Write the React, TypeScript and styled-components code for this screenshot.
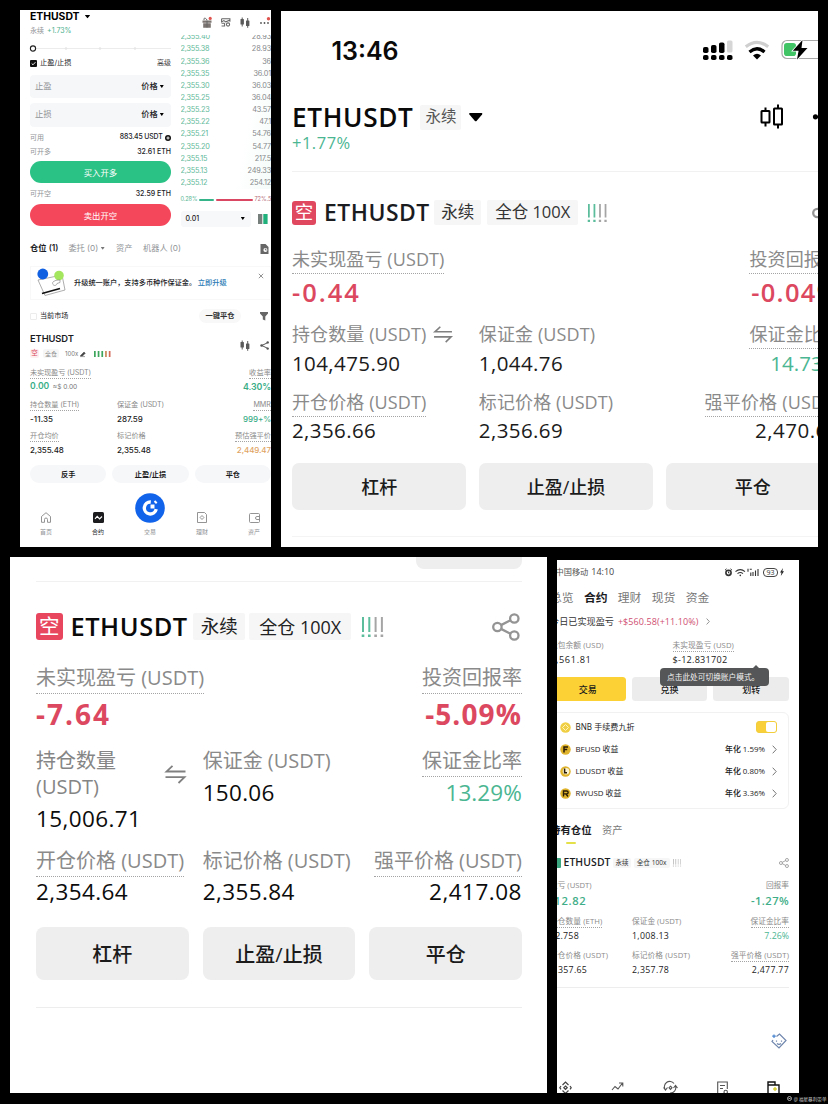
import React from "react";
import styled, { createGlobalStyle } from "styled-components";

const sans = `"Open Sans", "Noto Sans CJK SC", sans-serif`;
const inter = `Inter, "Noto Sans CJK SC", sans-serif`;

const Global = createGlobalStyle`
  * { box-sizing: border-box; }
  body { margin: 0; background: #000; overflow: hidden; }
  svg { display: block; flex: none; overflow: visible; }
`;

const Page = styled.main`
  width: 828px;
  height: 1104px;
  overflow: hidden;
  background: #000;
  display: flex;
  flex-direction: column;
  color: #111;
`;

const TopSpace = styled.div`height: 10px; flex: none;`;

const Shelf = styled.div<{ $left: number; $h: number }>`
  display: flex;
  align-items: flex-start;
  gap: 10px;
  padding-left: ${(p) => p.$left}px;
  height: ${(p) => p.$h}px;
  flex: none;
`;

const Screen = styled.section<{ $w: number; $h: number; $mt?: number; $pad: number; $font?: string }>`
  width: ${(p) => p.$w}px;
  height: ${(p) => p.$h}px;
  margin-top: ${(p) => p.$mt ?? 0}px;
  padding-left: ${(p) => p.$pad}px;
  background: #fff;
  overflow: hidden;
  flex: none;
  font-family: ${(p) => p.$font ?? sans};
`;

const Content = styled.div<{ $w: number; $ml?: number }>`
  width: ${(p) => p.$w}px;
  height: 100%;
  margin-left: ${(p) => p.$ml ?? 0}px;
  display: flex;
  flex-direction: column;
`;

const Line = styled.div<{ $h: number; $mt?: number; $gap?: number; $between?: boolean; $pl?: number }>`
  display: flex;
  align-items: center;
  flex: none;
  height: ${(p) => p.$h}px;
  margin-top: ${(p) => p.$mt ?? 0}px;
  padding-left: ${(p) => p.$pl ?? 0}px;
  gap: ${(p) => p.$gap ?? 0}px;
  justify-content: ${(p) => (p.$between ? "space-between" : "flex-start")};
`;

const Text = styled.span<{ $s: number; $c?: string; $w?: number; $ls?: number; $ml?: number }>`
  font-size: ${(p) => p.$s}px;
  color: ${(p) => p.$c ?? "#1b1c1f"};
  font-weight: ${(p) => p.$w ?? 400};
  letter-spacing: ${(p) => p.$ls ?? 0}px;
  margin-left: ${(p) => p.$ml ?? 0}px;
  white-space: nowrap;
  line-height: 1.3;
  flex: none;
`;

const Label = styled.span<{ $s: number; $h: number; $dots?: boolean; $ls?: number; $c?: string }>`
  display: block;
  width: max-content;
  font-size: ${(p) => p.$s}px;
  line-height: ${(p) => p.$h}px;
  height: ${(p) => p.$h + 1}px;
  letter-spacing: ${(p) => p.$ls ?? 0}px;
  color: ${(p) => p.$c ?? "#8a8a8a"};
  border-bottom: 1px dotted ${(p) => (p.$dots ? "#a4a4a4" : "transparent")};
  white-space: nowrap;
`;

const Value = styled.span<{ $s: number; $h: number; $mt?: number; $w?: number; $c?: string; $ls?: number }>`
  display: block;
  font-size: ${(p) => p.$s}px;
  line-height: ${(p) => p.$h}px;
  height: ${(p) => p.$h}px;
  margin-top: ${(p) => p.$mt ?? 0}px;
  font-weight: ${(p) => p.$w ?? 400};
  color: ${(p) => p.$c ?? "#1b1b1b"};
  letter-spacing: ${(p) => p.$ls ?? 0}px;
  white-space: nowrap;
`;

const Metrics = styled.div<{ $cols: string; $gap?: number; $mt: number }>`
  display: grid;
  grid-template-columns: ${(p) => p.$cols};
  column-gap: ${(p) => p.$gap ?? 0}px;
  margin-top: ${(p) => p.$mt}px;
  flex: none;
`;

const Metric = styled.div<{ $right?: boolean }>`
  display: flex;
  flex-direction: column;
  min-width: 0;
  align-items: ${(p) => (p.$right ? "flex-end" : "flex-start")};
`;

const Divider = styled.div<{ $mt: number; $c?: string }>`
  height: 1px;
  flex: none;
  margin-top: ${(p) => p.$mt}px;
  background: ${(p) => p.$c ?? "#ededed"};
`;

const Actions = styled.div<{ $gap: number; $mt: number }>`
  display: grid;
  grid-template-columns: repeat(3, 1fr);
  gap: ${(p) => p.$gap}px;
  margin-top: ${(p) => p.$mt}px;
  flex: none;
`;

const Button = styled.div<{ $h: number; $s: number; $r: number; $bg?: string; $c?: string; $w?: number; $mt?: number }>`
  height: ${(p) => p.$h}px;
  margin-top: ${(p) => p.$mt ?? 0}px;
  border-radius: ${(p) => p.$r}px;
  background: ${(p) => p.$bg ?? "#eeeeee"};
  color: ${(p) => p.$c ?? "#1b1b1b"};
  font-size: ${(p) => p.$s}px;
  font-weight: ${(p) => p.$w ?? 500};
  display: flex;
  align-items: center;
  justify-content: center;
  white-space: nowrap;
  flex: none;
`;

const Chip = styled.span<{ $w: number; $h: number; $s: number; $ml?: number; $bg?: string; $c?: string; $ls?: number; $r?: number; $bold?: boolean }>`
  width: ${(p) => p.$w}px;
  height: ${(p) => p.$h}px;
  margin-left: ${(p) => p.$ml ?? 0}px;
  background: ${(p) => p.$bg ?? "#f6f6f6"};
  color: ${(p) => p.$c ?? "#333"};
  font-size: ${(p) => p.$s}px;
  font-weight: ${(p) => (p.$bold ? 600 : 400)};
  letter-spacing: ${(p) => p.$ls ?? 0}px;
  border-radius: ${(p) => p.$r ?? 2}px;
  display: flex;
  align-items: center;
  justify-content: center;
  white-space: nowrap;
  line-height: 1;
  flex: none;
`;

const Spacer = styled.div`flex: 1;`;
const MarkSlot = styled.span<{ $ml: number }>`margin-left: ${(p) => p.$ml}px; flex: none;`;

/* ---------- icons ---------- */

const Caret = ({ w, h, c = "#000", ml = 0 }: { w: number; h: number; c?: string; ml?: number }) => (
  <MarkSlot $ml={ml}>
    <svg width={w} height={h} viewBox="0 0 10 6" preserveAspectRatio="none">
      <path d="M0.6 0h8.8q.9.3.3 1L5.6 5.6q-.6.6-1.2 0L.3 1Q-.3.3.6 0z" fill={c} />
    </svg>
  </MarkSlot>
);

const SignalMarks = ({ w, h, green = "#5bbd9b", gray = "#a5a5a5" }: { w: number; h: number; green?: string; gray?: string }) => (
  <svg width={w} height={h} viewBox="0 0 20 20" preserveAspectRatio="none">
    {[0, 1, 2, 3].map((i) => (
      <g key={i} fill={i < 2 ? green : gray}>
        <rect x={i * 6} y="0" width="1.9" height="15" />
        <rect x={i * 6 - 0.3} y="17.5" width="2.5" height="2.5" />
      </g>
    ))}
  </svg>
);

const ShareRings = ({ s, c = "#949494", sw = 2.3 }: { s: number; c?: string; sw?: number }) => (
  <svg width={s} height={s} viewBox="0 0 28 28" fill="none" stroke={c} strokeWidth={sw}>
    <circle cx="5.4" cy="14" r="4.2" />
    <circle cx="22.3" cy="5.5" r="4.2" />
    <circle cx="22.3" cy="22.5" r="4.2" />
    <path d="M9 12.1l9.5-4.8M9 15.9l9.5 4.8" />
  </svg>
);

const SwapIcon = ({ w, h }: { w: number; h: number }) => (
  <svg width={w} height={h} viewBox="0 0 21 19" fill="none" stroke="#808080" strokeWidth="1.8">
    <path d="M20.5 6.5H1.5L7.5 0.8M0.5 12.2h19l-6 5.8" />
  </svg>
);

const SolidCandles = () => (
  <svg width="10" height="11" viewBox="0 0 10 11" fill="#5a5a5a">
    <rect x="0.5" y="2" width="3.4" height="5.5" rx="0.5" />
    <rect x="1.7" y="0.5" width="1" height="9" />
    <rect x="6" y="3.5" width="3.4" height="5.5" rx="0.5" />
    <rect x="7.2" y="1" width="1" height="9.8" />
  </svg>
);

const Chevron = ({ w = 5, h = 9 }: { w?: number; h?: number }) => (
  <svg width={w} height={h} viewBox="0 0 5 9" fill="none" stroke="#777" strokeWidth="1">
    <path d="M0.7 0.7L4.2 4.5L0.7 8.3" />
  </svg>
);

/* ---------- trading screen ---------- */

const TradeArea = styled.div`
  display: grid;
  grid-template-columns: 141px 90.5px;
  column-gap: 9.5px;
  height: 216px;
  flex: none;
`;
const Column = styled.div`display: flex; flex-direction: column; min-width: 0;`;
const Field = styled.div<{ $mt: number }>`
  display: flex;
  align-items: center;
  height: 23.5px;
  flex: none;
  margin-top: ${(p) => p.$mt}px;
  padding: 0 7px 0 5px;
  background: #f6f7f9;
  border-radius: 4px;
`;
const Book = styled.div`
  height: 154.5px;
  margin-top: 6.5px;
  overflow: hidden;
  flex: none;
  background: linear-gradient(100deg, #fff 70%, #f3fbf8);
`;
const BookRows = styled.div`margin-top: -3.5px;`;
const BookRow = styled.div`
  height: 12.15px;
  display: flex;
  align-items: center;
  justify-content: space-between;
`;
const Bar = styled.i<{ $w: number; $c: string; $ml?: number }>`
  width: ${(p) => p.$w}px;
  height: 2.5px;
  border-radius: 1px;
  margin-left: ${(p) => p.$ml ?? 0}px;
  background: ${(p) => p.$c};
  flex: none;
`;
const StepBox = styled.div`
  width: 70px;
  height: 16px;
  padding: 0 6px 0 5px;
  display: flex;
  align-items: center;
  justify-content: space-between;
  background: #f7f8f9;
  border-radius: 3px;
`;
const Banner = styled.div`
  display: flex;
  align-items: center;
  height: 34px;
  margin-top: 10.5px;
  padding-left: 6px;
  border: 1px solid #f8f8f8;
  flex: none;
`;
const CheckBox = styled.i`
  width: 7px;
  height: 7px;
  border: 1px solid #ececec;
  border-radius: 1px;
`;
const SymbolBlock = styled.div`
  display: flex;
  justify-content: space-between;
  align-items: center;
  height: 25px;
  margin-top: 10px;
  padding-right: 2px;
  flex: none;
`;
const SymbolIcons = styled.div`display: flex; gap: 10px; align-items: center; padding-bottom: 2px;`;
const TabBar = styled.nav`
  display: flex;
  width: 260px;
  height: 45px;
  margin: 8.5px 0 0 -10px;
  flex: none;
`;
const TabItem = styled.div`
  width: 52px;
  display: flex;
  flex-direction: column;
  align-items: center;
  justify-content: flex-end;
  gap: 5px;
`;
const CloseMark = styled.svg`margin: 0 6px 15px 0;`;
const FilterIcon = styled.svg`margin: 0 3px 0 19px;`;
const PriceBars = styled.svg`margin-left: 8px;`;
const TabIcon = styled.svg`margin-right: 2px;`;

const book: [string, string][] = [
  ["2,355.40", "28.93"], ["2,355.38", "28.93"], ["2,355.36", "36"], ["2,355.35", "36.01"],
  ["2,355.30", "36.03"], ["2,355.25", "36.04"], ["2,355.23", "43.57"], ["2,355.22", "47.1"],
  ["2,355.21", "54.76"], ["2,355.20", "54.77"], ["2,355.15", "217.5"], ["2,355.13", "249.33"],
  ["2,355.12", "254.12"],
];

const g1 = "#919497";

const TradeScreen = () => (
  <Screen $w={251} $h={537} $pad={10} $font={inter}>
    <Content $w={241}>
      <TradeArea>
        <Column>
          <Line $h={13}>
            <Text $s={10.4} $w={700} $c="#000">ETHUSDT</Text>
            <Caret w={5} h={3.2} ml={5} />
          </Line>
          <Line $h={12} $mt={1.5} $gap={3}>
            <Text $s={7} $c={g1}>永续</Text>
            <Text $s={7} $c="#49b08d">+1.73%</Text>
          </Line>
          <Line $h={13} $mt={5}>
            <svg width="141" height="9" viewBox="0 0 141 9">
              <path d="M6 4.5H141" stroke="#ececec" strokeWidth="1" />
              {[36, 70, 105].map((x) => <circle key={x} cx={x} cy="4.5" r="1.3" fill="#e6e6e6" />)}
              <circle cx="3" cy="4.5" r="2.6" fill="#fff" stroke="#222" strokeWidth="1.1" />
            </svg>
          </Line>
          <Line $h={12} $mt={2.5}>
            <svg width="7" height="7" viewBox="0 0 7 7">
              <rect width="7" height="7" rx="1" fill="#111" />
              <path d="M1.7 3.5L3 4.8L5.4 2.2" stroke="#fff" strokeWidth="0.9" fill="none" />
            </svg>
            <Text $s={7.2} $ml={3}>止盈/止损</Text>
            <Spacer />
            <Text $s={7} $c="#444">高级</Text>
          </Line>
          {["止盈", "止损"].map((name, i) => (
            <Field key={name} $mt={i ? 5 : 5.5}>
              <Text $s={8.3} $c={g1}>{name}</Text>
              <Spacer />
              <Text $s={8.3} $w={500}>价格</Text>
              <Caret w={3.6} h={3} ml={2.5} />
            </Field>
          ))}
          <Line $h={12} $mt={5} $between>
            <Text $s={7} $c={g1}>可用</Text>
            <Line $h={12} $gap={2.5}>
              <Text $s={6.9} $w={500} $ls={-0.15}>883.45 USDT</Text>
              <svg width="6" height="6" viewBox="0 0 6 6"><circle cx="3" cy="3" r="3" fill="#111" /><path d="M3 1.4v3.2M1.4 3h3.2" stroke="#fff" strokeWidth="0.9" /></svg>
            </Line>
          </Line>
          <Line $h={12} $mt={2} $between>
            <Text $s={7} $c={g1}>可开多</Text>
            <Text $s={7} $w={500}>32.61 ETH</Text>
          </Line>
          <Button $h={22} $mt={3.5} $s={8.4} $r={11} $bg="#2bc286" $c="#fff" $w={400}>买入开多</Button>
          <Line $h={12} $mt={4.5} $between>
            <Text $s={7} $c={g1}>可开空</Text>
            <Text $s={7} $w={500}>32.59 ETH</Text>
          </Line>
          <Button $h={22} $mt={4.5} $s={8.4} $r={11} $bg="#f5475c" $c="#fff" $w={400}>卖出开空</Button>
        </Column>
        <Column>
          <Line $h={12} $mt={6} $gap={9.5} $pl={21}>
            <svg width="10" height="11" viewBox="0 0 10 11">
              <path d="M0.5 3.5h9v2.2h-9zM1.2 6.2h7.6v4.5H1.2z" fill="#7b7470" />
              <path d="M5 3.5v7M2.2 3C1 1 3.500.2 5 3" stroke="#666" fill="none" />
              <circle cx="8.2" cy="1.4" r="1.6" fill="#e0544f" />
            </svg>
            <svg width="9.5" height="9" viewBox="0 0 10 9" fill="none" stroke="#666" strokeWidth="1.1">
              <path d="M0.6 0.6h8.8v3M0.6.6v3.2L3 2.4l2 1.4L9 2.2M0.6 5.2h3.2M0.6 8.2h3.2V5.2" />
              <circle cx="7.4" cy="6.6" r="1.7" />
            </svg>
            <SolidCandles />
            <svg width="12" height="11" viewBox="0 0 12 11" fill="#555">
              <circle cx="1" cy="6" r="0.9" /><circle cx="4.5" cy="6" r="0.9" /><circle cx="8" cy="6" r="0.9" />
              <circle cx="8.5" cy="1.8" r="1.7" fill="#e0544f" />
            </svg>
          </Line>
          <Book>
            <BookRows>
              {book.map(([p, q]) => (
                <BookRow key={p}>
                  <Text $s={7.3} $c="#5fb999" $ls={-0.2}>{p}</Text>
                  <Text $s={7.3} $c="#85888b" $ls={-0.15}>{q}</Text>
                </BookRow>
              ))}
            </BookRows>
          </Book>
          <Line $h={12} $mt={5}>
            <Text $s={5.6} $c="#55b593" $ls={-0.1}>0.28%</Text>
            <Bar $w={14.5} $c="#35b48a" $ml={2} />
            <Bar $w={37} $c="#d94763" $ml={2} />
            <Text $s={5.6} $c="#b56b78" $ml={1.5}>72%.5</Text>
          </Line>
          <Line $h={16} $mt={4.5} $gap={7.5}>
            <StepBox>
              <Text $s={7} $w={500}>0.01</Text>
              <Caret w={3.6} h={3} />
            </StepBox>
            <svg width="10" height="10" viewBox="0 0 10 10">
              <rect width="4.3" height="10" fill="#777f7d" /><rect x="5.3" width="4.3" height="10" fill="#1fb07c" />
            </svg>
          </Line>
        </Column>
      </TradeArea>

      <Line $h={14} $mt={15.5}>
        <Text $s={8.3} $w={600}>仓位 (1)</Text>
        <Text $s={8.2} $c={g1} $ml={10}>委托 (0)</Text>
        <Caret w={3.4} h={2.6} c="#777" ml={2.5} />
        <Text $s={8.2} $c={g1} $ml={12}>资产</Text>
        <Text $s={8.2} $c={g1} $ml={10.5}>机器人 (0)</Text>
        <Spacer />
        <TabIcon width="9" height="10" viewBox="0 0 9 10">
          <path d="M0.5 0h5L8.5 3v7h-8z" fill="#666" /><circle cx="5.4" cy="6" r="2" fill="#fff" /><path d="M5.4 4.6V6h1.3" stroke="#555" strokeWidth="0.8" fill="none" />
        </TabIcon>
      </Line>
      <Banner>
        <svg width="29" height="28" viewBox="0 0 29 28">
          <path d="M1 11l24-5 3 15-20 5.500z" fill="#fff" stroke="#999" strokeWidth="0.8" />
          <path d="M5 24.500l18-5" stroke="#111" strokeWidth="1.800" />
          <circle cx="5.800" cy="5" r="5.400" fill="#1260e2" />
          <circle cx="22" cy="6.500" r="4.800" fill="#a5e65f" />
          <path d="M16.500 12.500a2.200 2.200 0 1 0 3.500 2l3-1v-2.500l-4 .3z" fill="#fff" stroke="#777" strokeWidth="0.6" />
        </svg>
        <Text $s={7.2} $w={500} $ml={8}>升级统一账户，支持多币种作保证金。</Text>
        <Text $s={7.3} $w={500} $c="#2a7bb5" $ml={1.5}>立即升级</Text>
        <Spacer />
        <CloseMark width="6" height="6" viewBox="0 0 6 6"><path d="M0.8 0.8l4.4 4.4M5.2.8L.8 5.2" stroke="#777" strokeWidth="0.8" /></CloseMark>
      </Banner>
      <Line $h={15} $mt={8.5}>
        <CheckBox />
        <Text $s={7.1} $ml={3}>当前市场</Text>
        <Spacer />
        <Chip $w={42} $h={14} $s={7.3} $r={7} $bold $bg="#f8f8f8">一键平仓</Chip>
        <FilterIcon width="8" height="9" viewBox="0 0 8 9"><path d="M0 0h8v1.6L5.3 4.4V8.6L2.8 7.5V4.4L0 1.6z" fill="#666" /></FilterIcon>
      </Line>
      <SymbolBlock>
        <Column>
          <Line $h={12}><Text $s={9.4} $w={600} $ls={-0.1}>ETHUSDT</Text></Line>
          <Line $h={10} $mt={3}>
            <Chip $w={9} $h={9} $s={6.5} $bg="#fdeef0" $c="#d9495c">空</Chip>
            <Chip $w={16} $h={9} $s={6} $ml={4} $c="#888">全仓</Chip>
            <Text $s={6} $c="#777" $ml={6}>100x</Text>
            <svg width="8" height="6" viewBox="0 0 8 6"><path d="M2.5 4.5L6 1l1.3 1.2L4.5 5H2.5zM2 5.6h5" fill="#444" stroke="#444" strokeWidth="0.5" /></svg>
            <PriceBars width="17" height="6" viewBox="0 0 17 6">
              {["#3da55c", "#3da55c", "#3da55c", "#c98a5a", "#d46a5a"].map((c, i) => <rect key={i} x={i * 3.7} y="0" width="1.7" height="6" fill={c} />)}
            </PriceBars>
          </Line>
        </Column>
        <SymbolIcons>
          <SolidCandles />
          <svg width="9" height="9" viewBox="0 0 9 9"><path d="M8 1.5L1.8 4.5L8 7.5" stroke="#555" strokeWidth="1" fill="none" /><circle cx="1.6" cy="4.5" r="1.3" fill="#555" /><circle cx="7.7" cy="1.4" r="1.2" fill="#555" /><circle cx="7.7" cy="7.6" r="1.2" fill="#555" /></svg>
        </SymbolIcons>
      </SymbolBlock>
      <Metrics $cols="87px 80px 1fr" $mt={9.5}>
        <Metric>
          <Label $s={7.2} $h={10} $dots $ls={-0.15}>未实现盈亏 (USDT)</Label>
          <Line $h={12} $mt={2} $gap={3.5}>
            <Text $s={8.6} $w={600} $c="#38ad86">0.00</Text>
            <Text $s={6.6} $c="#777">≈$ 0.00</Text>
          </Line>
        </Metric>
        <Metric />
        <Metric $right>
          <Label $s={7.3} $h={10} $dots>收益率</Label>
          <Value $s={8.8} $h={12} $mt={2} $w={600} $c="#38ad86" $ls={-0.1}>4.30%</Value>
        </Metric>
      </Metrics>
      <Metrics $cols="87px 80px 1fr" $mt={7}>
        <Metric>
          <Label $s={7.2} $h={10} $dots $ls={-0.1}>持仓数量 (ETH)</Label>
          <Value $s={8} $h={12} $mt={2} $w={500} $ls={0.1}>-11.35</Value>
        </Metric>
        <Metric>
          <Label $s={7.2} $h={10} $ls={-0.15}>保证金 (USDT)</Label>
          <Value $s={8} $h={12} $mt={2} $w={500}>287.59</Value>
        </Metric>
        <Metric $right>
          <Label $s={7.2} $h={10} $dots>MMR</Label>
          <Value $s={8} $h={12} $mt={2} $w={500} $c="#38ad86" $ls={-0.1}>999+%</Value>
        </Metric>
      </Metrics>
      <Metrics $cols="87px 80px 1fr" $mt={6}>
        <Metric>
          <Label $s={7.2} $h={10} $dots>开仓均价</Label>
          <Value $s={8} $h={12} $mt={1.5} $w={500} $ls={-0.1}>2,355.48</Value>
        </Metric>
        <Metric>
          <Label $s={7.2} $h={10}>标记价格</Label>
          <Value $s={8} $h={12} $mt={1.5} $w={500} $ls={-0.1}>2,355.48</Value>
        </Metric>
        <Metric $right>
          <Label $s={7.2} $h={10} $dots>预估强平价</Label>
          <Value $s={8} $h={12} $mt={1.5} $w={500} $c="#dfa565" $ls={-0.1}>2,449.47</Value>
        </Metric>
      </Metrics>
      <Actions $gap={6} $mt={9}>
        {["反手", "止盈/止损", "平仓"].map((t) => <Button key={t} $h={18} $s={7.2} $r={9} $bg="#f6f7f9" $w={600}>{t}</Button>)}
      </Actions>
      <TabBar>
        <TabItem>
          <svg width="10" height="11" viewBox="0 0 10 11" fill="none" stroke="#888" strokeWidth="0.9"><path d="M0.5 4.5L5 .7l4.500 3.800V10.300H6.500V7.500a1.500 1.500 0 0 0-3 0v2.800H.5z" /></svg>
          <Text $s={6} $c={g1}>首页</Text>
        </TabItem>
        <TabItem>
          <svg width="11" height="11" viewBox="0 0 11 11"><rect width="11" height="11" rx="1.500" fill="#1c1c1e" /><path d="M2 6.800l2.200-2.500 2.400 2.600L9 4.500" stroke="#fff" fill="none" strokeWidth="1.100" /></svg>
          <Text $s={6}>合约</Text>
        </TabItem>
        <TabItem>
          <svg width="30" height="30" viewBox="0 0 30 30"><circle cx="15" cy="15" r="14.800" fill="#1163ea" /><path d="M15.800 9a6 6 0 1 0 5.400 7.200" stroke="#fff" strokeWidth="3.400" fill="none" /><path d="M15.500 11.500h4v4h-4z" fill="#fff" /><path d="M19.500 8l2.200 2.200" stroke="#fff" strokeWidth="2" /></svg>
          <Text $s={6} $c={g1}>交易</Text>
        </TabItem>
        <TabItem>
          <svg width="10" height="11" viewBox="0 0 10 11" fill="none" stroke="#888" strokeWidth="0.9"><path d="M.5.5h7L9.500 2.500v8H.5z" /><path d="M5 3.500l1.900 2L5 7.500l-1.900-2z" /></svg>
          <Text $s={6} $c={g1}>理财</Text>
        </TabItem>
        <TabItem>
          <svg width="11" height="10" viewBox="0 0 11 10" fill="none" stroke="#888" strokeWidth="0.9"><rect x=".5" y=".5" width="10" height="9" rx="1" /><path d="M10.500 3.500H8a1.500 1.500 0 0 0 0 3h2.500" /></svg>
          <Text $s={6} $c={g1}>资产</Text>
        </TabItem>
      </TabBar>
    </Content>
  </Screen>
);

/* ---------- large position cards ---------- */

const red = "#dc4860";
const mint = "#4bb692";

const StatusLine = styled(Line)`padding-left: 39.5px;`;
const ClockText = styled.span`
  font: 600 25px/26px ${inter};
  letter-spacing: 0;
  color: #0a0a0a;
`;

const PositionScreenWide = () => (
  <Screen $w={537} $h={536} $mt={1} $pad={11}>
    <Content $w={548}>
      <StatusLine $h={26} $mt={27}>
        <ClockText>13:46</ClockText>
        <Spacer />
        <svg width="137" height="26" viewBox="0 0 137 26">
          {[0, 1, 2, 3].map((i) => <rect key={i} x={i * 8} y="17" width="5.500" height="5" rx="1.800" />)}
          <rect x="0" y="9" width="5.500" height="6" rx="1.800" /><rect x="8" y="7" width="5.500" height="8" rx="1.800" />
          <rect x="16" y="4.500" width="5.500" height="10.500" rx="1.800" /><rect x="24" y="2.500" width="5.500" height="12" rx="1.500" fill="#d6d6d6" />
          <g fill="none" strokeWidth="3.200">
            <path d="M42.800 8.800Q54 0 65.200 8.800" stroke="#cfcfcf" />
            <path d="M46.500 14Q54 7.500 61.500 14" stroke="#000" />
          </g>
          <path d="M50 17.500Q54 14.200 58 17.500L54 21.500z" />
          <rect x="79" y="2.500" width="45" height="18" rx="5" fill="#fff" stroke="#a9a9a9" strokeWidth="1.200" />
          <rect x="81" y="5" width="12" height="13" rx="2.800" fill="#41c466" />
          <path d="M99.500 2L89.800 12.800h5.800L94 21.500l10.500-11.500h-6z" stroke="#fff" strokeWidth="1.500" paintOrder="stroke" />
        </svg>
      </StatusLine>
      <Line $h={26} $mt={40}>
        <Text $s={26.2} $w={600} $c="#0a0a0a" $ls={0.65}>ETHUSDT</Text>
        <Chip $w={41} $h={25} $s={15.500} $ml={7} $c="#555">永续</Chip>
        <Caret w={13.5} h={8.5} ml={7.5} />
        <Spacer />
        <svg width="80" height="26" viewBox="0 0 80 26">
          <g fill="none" stroke="#000" strokeWidth="2">
            <rect x="1.500" y="7" width="8" height="11.500" rx="0.500" /><path d="M5.500 3.500v3.500M5.500 18.500v4" />
            <rect x="14" y="4.500" width="8" height="16" rx="0.500" /><path d="M18 .5v4M18 20.500v4" />
          </g>
          <circle cx="55.500" cy="12.800" r="2.600" />
        </svg>
      </Line>
      <Line $h={18} $mt={4}><Text $s={16.500} $w={500} $c={mint} $ls={0.5}>+1.77%</Text></Line>
      <Divider $mt={19} $c="#f1f1f1" />
      <Line $h={25} $mt={28}>
        <Chip $w={24} $h={24} $s={18.500} $bg="#e0485f" $c="#fff" $r={3}>空</Chip>
        <Text $s={22.9} $w={600} $ml={8} $ls={0.5}>ETHUSDT</Text>
        <Chip $w={47} $h={25} $s={16.500} $ml={4.5}>永续</Chip>
        <Chip $w={91} $h={25} $s={16.500} $ml={6}>全仓 100X</Chip>
        <MarkSlot $ml={10}><SignalMarks w={18.500} h={18} /></MarkSlot>
        <Spacer />
        <ShareRings s={28} />
      </Line>
      <Metrics $cols="repeat(3, 1fr)" $gap={12.5} $mt={20}>
        <Metric>
          <Label $s={18} $h={28} $dots $ls={0.1}>未实现盈亏 (USDT)</Label>
          <Value $s={25.500} $h={29} $mt={3.5} $w={600} $c={red} $ls={2}>-0.44</Value>
        </Metric>
        <Metric />
        <Metric $right>
          <Label $s={18} $h={28} $dots $ls={0.1}>投资回报率</Label>
          <Value $s={25.500} $h={29} $mt={3.5} $w={600} $c={red} $ls={1.3}>-0.04%</Value>
        </Metric>
      </Metrics>
      <Metrics $cols="repeat(3, 1fr)" $gap={12.5} $mt={13}>
        <Metric>
          <Line $h={29} $gap={6.500}>
            <Label $s={18} $h={28} $ls={0.1}>持仓数量 (USDT)</Label>
            <SwapIcon w={20} h={17} />
          </Line>
          <Value $s={20.5} $h={24} $mt={2} $ls={0.4}>104,475.90</Value>
        </Metric>
        <Metric>
          <Label $s={18} $h={28} $ls={0.1}>保证金 (USDT)</Label>
          <Value $s={20.5} $h={24} $mt={2} $ls={0.4}>1,044.76</Value>
        </Metric>
        <Metric $right>
          <Label $s={18} $h={28} $dots $ls={0.1}>保证金比率</Label>
          <Value $s={20.5} $h={24} $mt={2} $ls={0.1} $c={mint}>14.73%</Value>
        </Metric>
      </Metrics>
      <Metrics $cols="repeat(3, 1fr)" $gap={12.5} $mt={13}>
        <Metric>
          <Label $s={18} $h={28} $dots $ls={0.1}>开仓价格 (USDT)</Label>
          <Value $s={20.5} $h={24} $mt={1.5} $ls={0.4}>2,356.66</Value>
        </Metric>
        <Metric>
          <Label $s={18} $h={28} $ls={0.1}>标记价格 (USDT)</Label>
          <Value $s={20.5} $h={24} $mt={1.5} $ls={0.4}>2,356.69</Value>
        </Metric>
        <Metric $right>
          <Label $s={18} $h={28} $dots $ls={0.2}>强平价格 (USDT)</Label>
          <Value $s={20.5} $h={24} $mt={1.5} $ls={0.5}>2,470.60</Value>
        </Metric>
      </Metrics>
      <Actions $gap={12.5} $mt={20.5}>
        {["杠杆", "止盈/止损", "平仓"].map((t) => <Button key={t} $h={47.5} $s={18} $r={7}>{t}</Button>)}
      </Actions>
      <Divider $mt={26} $c="#f4f4f4" />
    </Content>
  </Screen>
);

const CutButton = styled.div`
  align-self: flex-end;
  width: 106px;
  height: 11.5px;
  background: #eeeeee;
  border-radius: 0 0 8px 8px;
  flex: none;
`;
const SizeHead = styled.div`
  display: flex;
  align-items: center;
  justify-content: space-between;
  width: 150px;
  height: 53px;
  margin-top: 2.5px;
`;
const WrapLabel = styled.span`
  width: 90px;
  font-size: 20px;
  line-height: 26.5px;
  color: #858585;
`;
const ShareSlot = styled.span`margin-right: 2.5px;`;

const PositionScreen = () => (
  <Screen $w={537} $h={536} $pad={26}>
    <Content $w={486}>
      <CutButton />
      <Divider $mt={12.5} $c="#f1f1f1" />
      <Line $h={27} $mt={31}>
        <Chip $w={26.500} $h={27} $s={20.500} $bg="#e8465f" $c="#fff" $r={3}>空</Chip>
        <Text $s={25.4} $w={600} $c="#0a0a0a" $ml={8} $ls={0.55}>ETHUSDT</Text>
        <Chip $w={52} $h={27} $s={18.500} $ml={5.500} $c="#222">永续</Chip>
        <Chip $w={102} $h={27} $s={18} $ml={4} $c="#222">全仓 100X</Chip>
        <MarkSlot $ml={11}><SignalMarks w={21} h={20} /></MarkSlot>
        <Spacer />
        <ShareSlot><ShareRings s={28} /></ShareSlot>
      </Line>
      <Metrics $cols="repeat(3, 1fr)" $gap={14} $mt={22}>
        <Metric>
          <Label $s={20} $h={31} $dots>未实现盈亏 (USDT)</Label>
          <Value $s={28} $h={31} $mt={4.5} $w={700} $c={red} $ls={2}>-7.64</Value>
        </Metric>
        <Metric />
        <Metric $right>
          <Label $s={20} $h={31} $dots>投资回报率</Label>
          <Value $s={28} $h={31} $mt={4.5} $w={700} $c={red} $ls={1.1}>-5.09%</Value>
        </Metric>
      </Metrics>
      <Metrics $cols="repeat(3, 1fr)" $gap={14} $mt={15.5}>
        <Metric>
          <SizeHead>
            <WrapLabel>持仓数量 (USDT)</WrapLabel>
            <SwapIcon w={21} h={19} />
          </SizeHead>
          <Value $s={22.500} $h={28} $mt={4.5} $ls={0.4} $c="#0c0c0c">15,006.71</Value>
        </Metric>
        <Metric>
          <Label $s={20} $h={31}>保证金 (USDT)</Label>
          <Value $s={22.500} $h={28} $mt={1.5} $ls={0.3} $c="#0c0c0c">150.06</Value>
        </Metric>
        <Metric $right>
          <Label $s={20} $h={31} $dots>保证金比率</Label>
          <Value $s={22.500} $h={28} $mt={1.5} $ls={0.1} $c={mint}>13.29%</Value>
        </Metric>
      </Metrics>
      <Metrics $cols="repeat(3, 1fr)" $gap={14} $mt={11.5}>
        <Metric>
          <Label $s={20} $h={31} $dots>开仓价格 (USDT)</Label>
          <Value $s={22.500} $h={28} $mt={1.5} $ls={0.4} $c="#0c0c0c">2,354.64</Value>
        </Metric>
        <Metric>
          <Label $s={20} $h={31}>标记价格 (USDT)</Label>
          <Value $s={22.500} $h={28} $mt={1.5} $ls={0.4} $c="#0c0c0c">2,355.84</Value>
        </Metric>
        <Metric $right>
          <Label $s={20} $h={31} $dots>强平价格 (USDT)</Label>
          <Value $s={22.500} $h={28} $mt={1.5} $ls={0.5} $c="#0c0c0c">2,417.08</Value>
        </Metric>
      </Metrics>
      <Actions $gap={14} $mt={20.5}>
        {["杠杆", "止盈/止损", "平仓"].map((t) => <Button key={t} $h={53.5} $s={20} $r={8}>{t}</Button>)}
      </Actions>
      <Divider $mt={26.5} />
    </Content>
  </Screen>
);

/* ---------- wallet screen ---------- */

const Card = styled.div`
  height: 97px;
  margin: 11px 0 0 -3px;
  padding: 3px 11px 0 11.5px;
  border: 1px solid #f1f1f1;
  border-radius: 6px;
  flex: none;
`;
const CardRow = styled.div`display: flex; align-items: center; height: 22px;`;
const Toggle = styled.span`
  width: 21px;
  height: 12px;
  border-radius: 3px;
  border: 1px solid #f2cd3c;
  background: #f9d03a;
  display: flex;
  justify-content: flex-end;
  &::after {
    content: "";
    width: 10px;
    background: #fff;
    border-radius: 2px;
  }
`;
const Anchor = styled.div`position: relative;`;
const TipLayer = styled.div`position: absolute; left: 0; top: 11.5px;`;
const Tooltip = styled.div`
  position: absolute;
  left: 110px;
  top: -9px;
  width: 108.5px;
  height: 18px;
  border-radius: 4px;
  background: #555657;
  color: #f2f2f2;
  font-size: 7.7px;
  line-height: 18px;
  padding-left: 7px;
  white-space: nowrap;
  &::before {
    content: "";
    position: absolute;
    left: 93px;
    top: -3px;
    border: 3px solid transparent;
    border-top: 0;
    border-bottom-color: #555657;
  }
`;
const Underline = styled.i`
  width: 10.5px;
  height: 2px;
  margin: 4.5px 0 0 15.5px;
  border-radius: 1px;
  background: #e3e04a;
  flex: none;
`;
const SideBadge = styled.i`width: 10.5px; height: 10.5px; border-radius: 1px; background: #3aa57f; flex: none;`;
const BottomIcons = styled.div`
  display: flex;
  justify-content: space-between;
  align-items: flex-start;
  height: 12.5px;
  margin-top: auto;
  padding: 0 9px;
  flex: none;
`;
const RobotLine = styled(Line)`justify-content: flex-end; padding-right: 2px;`;
const BatteryPill = styled.span`
  border: 1px solid #444;
  border-radius: 4px;
  width: 15px;
  height: 9px;
  font-size: 7px;
  line-height: 7px;
  text-align: center;
  color: #333;
  margin-left: 2px;
`;
const BoltIcon = styled.svg`margin: 0 5px 0 2px;`;

const Coin = ({ kind }: { kind: number }) => (
  <svg width="11" height="11" viewBox="0 0 11 11">
    <circle cx="5.500" cy="5.500" r="5.200" fill={kind === 0 ? "#f0cf45" : "#dfb32c"} />
    {kind === 0 && <path d="M5.500 2.500l3 3-3 3-3-3z" fill="none" stroke="#fff3c0" strokeWidth="1" />}
    {kind === 1 && <path d="M4 8.500V3h4M4 5.600h3.200" fill="none" stroke="#2a1c05" strokeWidth="1.500" />}
    {kind === 2 && <g><circle cx="6" cy="5.200" r="3.300" fill="#fbf3cf" /><path d="M4.600 2.500v4.200H7" fill="none" stroke="#2a1c05" strokeWidth="1.500" /></g>}
    {kind === 3 && <path d="M3.500 8.500V3h3.200a1.400 1.400 0 0 1 0 2.900H3.500M6 6l2 2.500" fill="none" stroke="#2a1c05" strokeWidth="1.400" />}
  </svg>
);

const earn = [
  ["BFUSD 收益", "年化 1.59%"],
  ["LDUSDT 收益", "年化 0.80%"],
  ["RWUSD 收益", "年化 3.36%"],
];

const WalletScreen = () => (
  <Screen $w={242} $h={533} $mt={3} $pad={0}>
    <Content $w={239} $ml={-7}>
      <Line $h={12} $mt={6} $pl={5.5}>
        <Text $s={8.2} $c="#555">中国移动</Text>
        <Text $s={9} $c="#444" $ml={3}>14:10</Text>
        <Spacer />
        <svg width="37" height="9" viewBox="0 0 37 9" fill="none" stroke="#333">
          <circle cx="4.500" cy="4.800" r="2.600" strokeWidth="1.600" /><path d="M1 2.200L2.500.8M8 2.200L6.500.8M4.500 3.500v1.500h1" />
          <path d="M11.500 3.600Q16.300-.3 21 3.600M13.500 5.600Q16.300 3.400 19 5.600" strokeWidth="1.100" /><circle cx="16.300" cy="7.400" r=".8" fill="#333" stroke="none" />
          <path d="M24 .8v3M25.800 1.200h2M26.800 4.500v3.500M29 4v4M31.500 2.500v5.500M34 1v7" strokeWidth="1.100" />
        </svg>
        <BatteryPill>93</BatteryPill>
        <BoltIcon width="4" height="8" viewBox="0 0 4 8"><path d="M3 0L0 4.500h1.500L.8 8L4 3.200H2.300z" fill="#222" /></BoltIcon>
      </Line>
      <Line $h={16} $mt={12} $gap={10.3} $pl={-1}>
        <Text $s={11.8} $c="#777">总览</Text>
        <Text $s={11.8} $w={700}>合约</Text>
        <Text $s={11.8} $c="#777">理财</Text>
        <Text $s={11.8} $c="#777">现货</Text>
        <Text $s={11.8} $c="#777">资金</Text>
      </Line>
      <Line $h={12} $mt={9.5}>
        <Text $s={9.15} $c="#333">今日已实现盈亏</Text>
        <Text $s={9} $c="#cf5072" $ml={4} $ls={0.08}>+$560.58(+11.10%)</Text>
        <MarkSlot $ml={7.5}><Chevron w={4} h={7} /></MarkSlot>
      </Line>
      <Metrics $cols="122.5px 1fr" $mt={11.5}>
        <Metric>
          <Label $s={7.7} $h={12} $ls={0.1}>钱包余额 (USD)</Label>
          <Value $s={9.2} $h={12} $mt={1.5} $ls={0.65}>5,561.81</Value>
        </Metric>
        <Metric>
          <Label $s={7.7} $h={12} $dots $ls={0.1}>未实现盈亏 (USD)</Label>
          <Value $s={9.1} $h={12} $mt={1.5} $ls={0.25}>$-12.831702</Value>
        </Metric>
      </Metrics>
      <Anchor>
        <Actions $gap={6} $mt={11.5}>
          <Button $h={24} $s={9} $r={3.500} $bg="#fbd135">交易</Button>
          <Button $h={24} $s={9} $r={3.500} $bg="#ececec">兑换</Button>
          <Button $h={24} $s={9} $r={3.500} $bg="#ececec">划转</Button>
        </Actions>
        <TipLayer><Tooltip>点击此处可切换账户模式。</Tooltip></TipLayer>
      </Anchor>
      <Card>
        <CardRow>
          <Coin kind={0} />
          <Text $s={8.1} $ml={5} $c="#222">BNB 手续费九折</Text>
          <Spacer />
          <Toggle />
        </CardRow>
        {earn.map(([a, b], i) => (
          <CardRow key={a}>
            <Coin kind={i + 1} />
            <Text $s={7.9} $ml={5} $c="#222">{a}</Text>
            <Spacer />
            <Text $s={7.9} $w={500} $c="#222">{b}</Text>
            <MarkSlot $ml={7}><Chevron /></MarkSlot>
          </CardRow>
        ))}
      </Card>
      <Line $h={14} $mt={14.5} $gap={10.5}>
        <Text $s={10.4} $w={600}>持有仓位</Text>
        <Text $s={10.2} $c="#777">资产</Text>
      </Line>
      <Underline />
      <Line $h={12} $mt={13}>
        <SideBadge />
        <Text $s={10.4} $w={600} $ml={3} $ls={0.1}>ETHUSDT</Text>
        <Chip $w={18} $h={10} $s={6.5} $ml={2.5}>永续</Chip>
        <Chip $w={36} $h={10} $s={6.6} $ml={2.5}>全仓 100x</Chip>
        <MarkSlot $ml={3}><SignalMarks w={8} h={7.5} green="#b5b5b5" gray="#c5c5c5" /></MarkSlot>
        <Spacer />
        <ShareRings s={10} sw={2.3} />
      </Line>
      <Metrics $cols="82px 70px 1fr" $mt={10}>
        <Metric>
          <Label $s={7.7} $h={12}>盈亏 (USDT)</Label>
          <Value $s={11.2} $h={14} $mt={2} $w={600} $c="#3fae88" $ls={0.7}>-12.82</Value>
        </Metric>
        <Metric />
        <Metric $right>
          <Label $s={7.7} $h={12}>回报率</Label>
          <Value $s={11.2} $h={14} $mt={2} $w={600} $c="#3fae88" $ls={0.4}>-1.27%</Value>
        </Metric>
      </Metrics>
      <Metrics $cols="82px 70px 1fr" $mt={7}>
        <Metric>
          <Label $s={7.7} $h={12} $dots $ls={0.1}>持仓数量 (ETH)</Label>
          <Value $s={8.9} $h={12} $mt={2} $ls={0.2}>12.758</Value>
        </Metric>
        <Metric>
          <Label $s={7.7} $h={12}>保证金 (USDT)</Label>
          <Value $s={8.8} $h={12} $mt={2} $ls={0.3}>1,008.13</Value>
        </Metric>
        <Metric $right>
          <Label $s={7.7} $h={12} $dots>保证金比率</Label>
          <Value $s={8.8} $h={12} $mt={2} $c={mint}>7.26%</Value>
        </Metric>
      </Metrics>
      <Metrics $cols="82px 70px 1fr" $mt={7}>
        <Metric>
          <Label $s={7.7} $h={12} $ls={0.1}>开仓价格 (USDT)</Label>
          <Value $s={8.8} $h={12} $mt={1.5} $ls={0.3}>2,357.65</Value>
        </Metric>
        <Metric>
          <Label $s={7.7} $h={12} $ls={0.1}>标记价格 (USDT)</Label>
          <Value $s={8.8} $h={12} $mt={1.5} $ls={0.3}>2,357.78</Value>
        </Metric>
        <Metric $right>
          <Label $s={7.7} $h={12} $dots $ls={0.1}>强平价格 (USDT)</Label>
          <Value $s={8.8} $h={12} $mt={1.5} $ls={0.3}>2,477.77</Value>
        </Metric>
      </Metrics>
      <Divider $mt={11.5} />
      <RobotLine $h={18} $mt={44}>
        <svg width="16" height="16" viewBox="0 0 16 16" fill="none" stroke="#6f86ad" strokeWidth="1.200">
          <path d="M5.500 3.500L8.500 1l6.500 6.500-7 7.500L1 8.500l1-1.500" /><path d="M5.500 7.500v1.200M10.500 7.500v1.200M6 10.500q2 1.600 4 0" /><path d="M3 1.500v3.500M1.200 3.200h3.600" stroke="#4a86d0" />
        </svg>
      </RobotLine>
      <BottomIcons>
        <svg width="13" height="13" viewBox="0 0 13 13" fill="none" stroke="#444" strokeWidth="1.200"><path d="M3.500 4L6.500 1l3 3M3.500 9.500l3 3 3-3M6.500 5l1.700 1.700L6.500 8.400 4.800 6.700zM2 5L.8 6.700 2 8.400M11 5l1.200 1.700L11 8.400" /></svg>
        <svg width="13" height="13" viewBox="0 0 13 13" fill="none" stroke="#555" strokeWidth="1.100"><path d="M1 9l3-3.500 3 2.500 4.500-6M8 2h3.800v3.500" /></svg>
        <svg width="15" height="13" viewBox="0 0 15 13" fill="none" stroke="#555" strokeWidth="1.100"><path d="M2.500 9A5.300 5.300 0 0 1 11 2.500M12.500 5A5.300 5.300 0 0 1 7 12M.5 6.500l2 2.500 2-2.500M10.500 7l2-2.500 2 2.500M7.500 5.200L9 6.800 7.500 8.400 6 6.800z" /></svg>
        <svg width="11" height="13" viewBox="0 0 11 13" fill="none" stroke="#555" strokeWidth="1.100"><path d="M6 12.500H.7V1h9.600v7M3 4.500h5M3 7.500h3" /><circle cx="8.700" cy="11" r="1.700" /></svg>
        <svg width="13" height="14" viewBox="0 0 13 14" fill="none" stroke="#111" strokeWidth="1.400"><path d="M1 13V1h7v2.800M1 4h11v9" /><path d="M8 5.800l2.200 2.200L8 10.200 5.800 8z" fill="#d8d040" stroke="none" /></svg>
      </BottomIcons>
    </Content>
  </Screen>
);

const Watermark = styled.footer`
  display: flex;
  align-items: center;
  justify-content: flex-end;
  gap: 1.5px;
  height: 10px;
  padding-right: 1.5px;
  font: 4.6px/10px ${sans};
  color: #c8c8c8;
`;

export default function App() {
  return (
    <>
      <Global />
      <Page>
        <TopSpace />
        <Shelf $left={20} $h={547}>
          <TradeScreen />
          <PositionScreenWide />
        </Shelf>
        <Shelf $left={10} $h={536.5}>
          <PositionScreen />
          <WalletScreen />
        </Shelf>
        <Watermark>
          <svg width="5" height="5" viewBox="0 0 5 5" fill="none" stroke="#ccc" strokeWidth=".8"><circle cx="2.500" cy="2.500" r="2" /><path d="M1.500 2.500h2" /></svg>
          <span>@ 福星暴利带单</span>
        </Watermark>
      </Page>
    </>
  );
}
